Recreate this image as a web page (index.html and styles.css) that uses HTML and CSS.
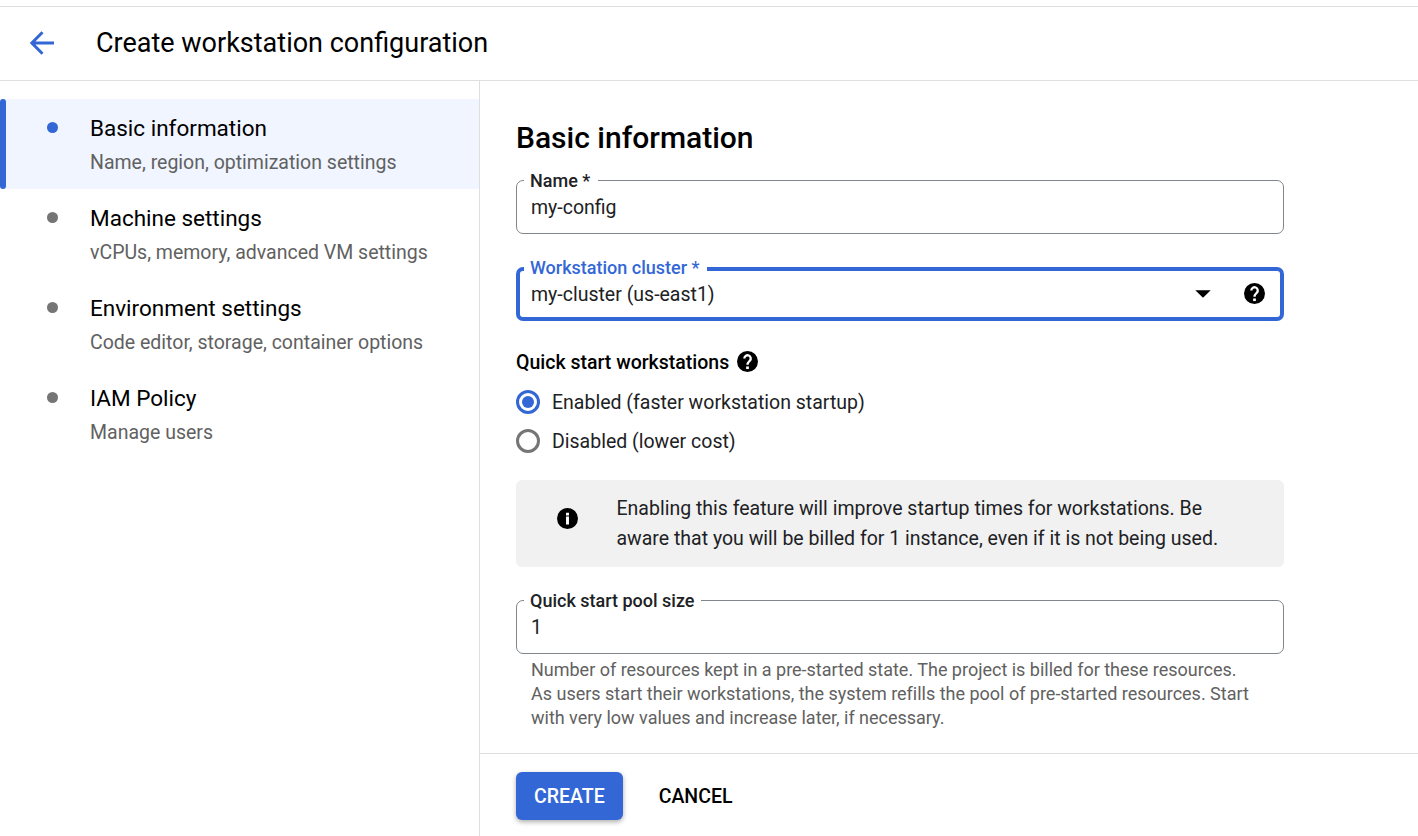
FILE: index.html
```html
<!DOCTYPE html>
<html lang="en">
<head>
<meta charset="utf-8">
<title>Create workstation configuration</title>
<link rel="stylesheet" href="styles.css">
</head>
<body>
<div class="app">
  <header class="header">
    <svg class="back" viewBox="0 0 24 24" width="24" height="24"><path d="M24 12H2M12.500 1.200 1.900 12l10.600 10.800" fill="none" stroke="#3367d6" stroke-width="3"/></svg>
    <h1 class="title">Create workstation configuration</h1>
  </header>
  <div class="body">
    <nav class="steps">
      <a class="step active"><i class="dot"></i><span class="name">Basic information</span><span class="desc">Name, region, optimization settings</span></a>
      <a class="step"><i class="dot"></i><span class="name">Machine settings</span><span class="desc">vCPUs, memory, advanced VM settings</span></a>
      <a class="step"><i class="dot"></i><span class="name">Environment settings</span><span class="desc">Code editor, storage, container options</span></a>
      <a class="step"><i class="dot"></i><span class="name">IAM Policy</span><span class="desc">Manage users</span></a>
    </nav>
    <main class="main">
      <div class="form">
        <h2 class="heading">Basic information</h2>
        <div class="field">
          <label class="label">Name *</label>
          <span class="value">my-config</span>
        </div>
        <div class="field focused">
          <label class="label">Workstation cluster *</label>
          <span class="value">my-cluster (us-east1)</span>
          <svg class="caret" viewBox="0 0 16 8" width="16" height="8"><path d="M.3.2h15.4L8 7.8z" fill="#000"/></svg>
          <svg class="help" viewBox="2 2 20 20" width="21" height="21"><circle cx="12" cy="12" r="10"/><path class="mark" d="M9 9.200a3.050 3.050 0 1 1 5.200 2.100C13.100 12.400 12 13.100 12 15.100"/><path fill="#fff" d="M10.700 16.700h2.600v2.500h-2.600z"/></svg>
        </div>
        <div class="group">
          <span>Quick start workstations</span>
          <svg class="help" viewBox="2 2 20 20" width="21" height="21"><circle cx="12" cy="12" r="10"/><path class="mark" d="M9 9.200a3.050 3.050 0 1 1 5.200 2.100C13.100 12.400 12 13.100 12 15.100"/><path fill="#fff" d="M10.700 16.700h2.600v2.500h-2.600z"/></svg>
        </div>
        <div class="radio checked"><i class="ring"></i><span>Enabled (faster workstation startup)</span></div>
        <div class="radio"><i class="ring"></i><span>Disabled (lower cost)</span></div>
        <div class="notice">
          <svg class="info" viewBox="2 2 20 20" width="21" height="21"><circle cx="12" cy="12" r="10"/><path fill="#fff" d="M10.600 6.600h2.800v2.600h-2.800zM10.600 10.200h2.800v7.400h-2.800z"/></svg>
          <p class="notice-text">Enabling this feature will improve startup times for workstations. Be<br>aware that you will be billed for 1 instance, even if it is not being used.</p>
        </div>
        <div class="field pool">
          <label class="label">Quick start pool size</label>
          <span class="value">1</span>
        </div>
        <p class="hint">Number of resources kept in a pre-started state. The project is billed for these resources.<br>As users start their workstations, the system refills the pool of pre-started resources. Start<br>with very low values and increase later, if necessary.</p>
      </div>
      <footer class="actions">
        <button class="btn primary">CREATE</button>
        <button class="btn">CANCEL</button>
      </footer>
    </main>
  </div>
</div>
</body>
</html>
```
FILE: styles.css
```css
* { box-sizing: border-box; }
body { margin: 0; background: #fff; color: #000; font-family: Roboto, sans-serif; }
h1, h2, p { margin: 0; }
svg { display: block; flex: none; }
.app { display: flex; flex-direction: column; height: 836px; padding-top: 6px; overflow: hidden; }
.header { display: flex; align-items: center; flex: none; height: 75px; padding: 0 0 2px 30px; gap: 42px; border-top: 1px solid #dfdfdf; border-bottom: 1px solid #dfdfdf; }
.title { font-size: 27px; font-weight: 400; line-height: 36px; }
.body { display: flex; flex: 1; min-height: 0; }
.steps { width: 480px; flex: none; padding-top: 18px; border-right: 1px solid #dfdfdf; }
.step { position: relative; display: flex; flex-direction: column; height: 90px; padding: 14px 0 0 90px; }
.step.active { background: #f0f5ff; }
.step.active::before { content: ""; position: absolute; left: 0; top: 0; width: 6px; height: 90px; border-radius: 3px; background: #3367d6; }
.dot { position: absolute; left: 47px; top: 23px; width: 11px; height: 11px; border-radius: 50%; background: #757575; }
.active .dot { background: #3367d6; }
.name { font-size: 22.5px; line-height: 30px; }
.desc { margin-top: 5px; font-size: 19.5px; line-height: 30px; color: #616161; }
.main { flex: 1; display: flex; flex-direction: column; }
.form { flex: 1; padding: 39px 0 0 36px; width: 804px; }
.heading { font-size: 30px; font-weight: 500; line-height: 36px; }
.field { position: relative; display: flex; align-items: center; height: 54px; margin-top: 24px; padding: 0 15px 0 14px; border: 1px solid #80868b; border-radius: 7px; font-size: 19.5px; color: #202124; }
.label { position: absolute; left: 7px; top: -12px; padding: 0 8px 0 6px; background: #fff; font-size: 18px; font-weight: 500; line-height: 24px; white-space: nowrap; }
.focused { margin-top: 33px; padding: 0 15px 0 11px; border: 4px solid #3367d6; }
.focused .label { left: 4px; top: -15px; padding-right: 7px; color: #3367d6; }
.value { flex: 1; padding-top: 2px; line-height: 30px; }
.caret { margin-right: 33px; }
.help { fill: #000; margin-bottom: 2px; }
.mark { fill: none; stroke: #fff; stroke-width: 2.2; }
.group { display: flex; align-items: center; gap: 8px; height: 30px; margin-top: 26px; font-size: 19.5px; font-weight: 500; }
.radio { display: flex; align-items: center; gap: 12px; height: 30px; margin-top: 10px; font-size: 19.5px; color: #202124; }
.radio + .radio { margin-top: 9px; }
.ring { display: flex; align-items: center; justify-content: center; width: 24px; height: 24px; border: 3px solid #757575; border-radius: 50%; }
.checked .ring { border-color: #3367d6; }
.checked .ring::after { content: ""; width: 12px; height: 12px; border-radius: 50%; background: #3367d6; }
.notice { display: flex; height: 87px; margin-top: 24px; padding: 14px 0 0 41px; gap: 38.500px; border-radius: 6px; background: #f1f1f1; font-size: 19.5px; color: #202124; }
.info { margin-top: 14px; }
.notice-text { line-height: 30px; white-space: nowrap; }
.pool { margin-top: 33px; }
.pool .label { padding-right: 6px; }
.hint { margin-top: 4px; padding-left: 15px; font-size: 18px; line-height: 24px; letter-spacing: -.01px; color: #616161; white-space: nowrap; }
.actions { display: flex; flex: none; height: 83px; padding: 18px 36px; gap: 18px; border-top: 1px solid #dfdfdf; }
.btn { height: 48px; padding: 2px 18px 0; border: 0; border-radius: 6px; background: none; font: 500 19.5px/46px Roboto, sans-serif; color: #000; }
.primary { background: #3367d6; color: #fff; box-shadow: 0 2px 5px rgba(0, 0, 0, .32); }
```
